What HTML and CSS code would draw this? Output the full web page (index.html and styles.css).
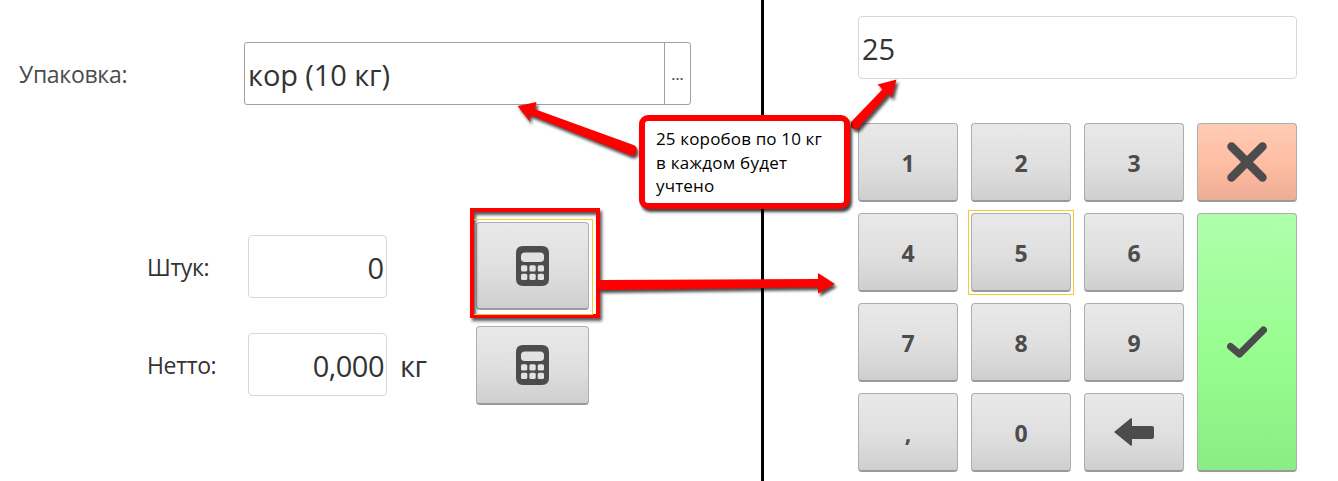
FILE: index.html
```html
<!DOCTYPE html>
<html lang="ru">
<head>
<meta charset="utf-8">
<title>Упаковка</title>
<link rel="stylesheet" href="styles.css">
</head>
<body>
<svg class="defs" width="0" height="0">
  <symbol id="calc" viewBox="0 0 33 40">
    <path fill="#4c4c4c" fill-rule="evenodd" d="M7 0H26Q33 0 33 7V33Q33 40 26 40H7Q0 40 0 33V7Q0 0 7 0ZM9 6.500Q5 6.500 5 10V12.500Q5 16 9 16H24Q28 16 28 12.500V10Q28 6.500 24 6.500Z"/>
    <g fill="#e2e2e2">
      <rect x="5" y="19.300" width="6.300" height="6.300" rx="1.500"/><rect x="13.400" y="19.300" width="6.300" height="6.300" rx="1.500"/><rect x="21.700" y="19.300" width="6.300" height="6.300" rx="1.500"/>
      <rect x="5" y="27.700" width="6.300" height="6.300" rx="1.500"/><rect x="13.400" y="27.700" width="6.300" height="6.300" rx="1.500"/><rect x="21.700" y="27.700" width="6.300" height="6.300" rx="1.500"/>
    </g>
  </symbol>
</svg>
<main class="screen">
  <section class="form">
    <div class="row pack">
      <label class="label muted">Упаковка:</label>
      <div class="picker"><span class="value kor">кор (10 кг)</span><button class="more">...</button></div>
    </div>
    <div class="row pieces">
      <label class="label shtuk">Штук:</label>
      <div class="input"><span class="value">0</span></div>
      <button class="btn calc tall"><svg width="33" height="40"><use href="#calc"/></svg></button>
    </div>
    <div class="row net">
      <label class="label netto">Нетто:</label>
      <div class="input"><span class="value zeros">0,000</span></div>
      <span class="value unit">кг</span>
      <button class="btn calc"><svg width="33" height="40"><use href="#calc"/></svg></button>
    </div>
  </section>
  <section class="pad">
    <div class="display"><span class="value">25</span></div>
    <div class="keys">
      <button class="btn">1</button><button class="btn">2</button><button class="btn">3</button>
      <button class="btn cancel"><svg width="40" height="40"><path d="M4.500 4.500L35.500 35.500M35.500 4.500L4.500 35.500" stroke="#4c4c4c" stroke-width="8.500" stroke-linecap="round"/></svg></button>
      <button class="btn">4</button><button class="btn focused">5</button><button class="btn">6</button>
      <button class="btn ok"><svg width="40" height="32"><path d="M3.500 20.500L12.500 28L36.500 4" fill="none" stroke="#4c4c4c" stroke-width="7" stroke-linecap="round" stroke-linejoin="round"/></svg></button>
      <button class="btn">7</button><button class="btn">8</button><button class="btn">9</button>
      <button class="btn">,</button><button class="btn">0</button>
      <button class="btn back"><svg width="40" height="28"><path d="M0 14L16.500 .5Q18 -.5 18 1.500V8H38Q40 8 40 10V19Q40 21 38 21H18V26.500Q18 28.500 16.500 27.500Z" fill="#4c4c4c"/></svg></button>
    </div>
  </section>
</main>
<div class="highlight"></div>
<svg class="arrows" width="1338" height="481" fill="#f00">
  <path d="M517.500 106L536.500 102L535 109.300L633.500 145A5.500 5.500 0 0 1 631 155.500L529.500 114.800L530 121.700Z"/>
  <path d="M896.500 79.500L877.500 84.500L882.500 89.300L851 122V127Q854 130.500 858 128.500L889 93.300L891.700 98.300Z"/>
  <path d="M602 280L818 279V273L835 284L818 293.500V287.300L602 290Q598 290 598 285Q598 280 602 280Z"/>
</svg>
<div class="callout"><p>25 коробов по 10 кг</p><p class="l2">в каждом будет</p><p class="l3">учтено</p></div>
</body>
</html>
```
FILE: styles.css
```css
* { box-sizing: border-box; }
body { margin: 0; width: 1338px; height: 481px; overflow: hidden; position: relative; background: #fff; color: #333; font-family: "Open Sans", "Noto Sans", sans-serif; }
button { font-family: inherit; margin: 0; padding: 0; }
p { margin: 0; }
.defs { position: absolute; }
.screen { display: flex; height: 481px; }
.form { width: 764px; flex: none; border-right: 3px solid #000; padding-top: 42px; }
.row { display: flex; }
.label { font-size: 23px; line-height: 65px; height: 63px; white-space: nowrap; }
.value { display: block; font-size: 29px; line-height: 62px; white-space: nowrap; }
.pack .label { width: 244px; padding-left: 19px; letter-spacing: -.3px; }
.muted { color: #4c4c4c; }
.picker { width: 447px; height: 63px; border: 1px solid #a0a0a0; border-radius: 3px; display: flex; justify-content: space-between; padding-left: 3px; }
.kor { line-height: 64px; letter-spacing: -.1px; }
.more { width: 26px; border: 0; border-left: 1px solid #a0a0a0; background: none; color: #4c4c4c; font-size: 15px; font-weight: 600; }
.pieces { margin-top: 117px; height: 88px; }
.pieces .label, .pieces .input { margin-top: 13px; }
.net { margin-top: 16px; }
.net .label, .net .input, .unit { margin-top: 7px; }
.pieces .label, .net .label { width: 248px; padding-left: 147px; letter-spacing: -.35px; }
.input { width: 139px; height: 63px; border: 1px solid #d8d8d8; border-radius: 4px; text-align: right; padding-right: 2px; }
.input .value { line-height: 64px; }
.zeros { letter-spacing: -.5px; }
.unit { width: 89px; padding-left: 13px; line-height: 66px; letter-spacing: -.4px; }
.pieces .calc { margin-left: 89px; }
.btn { display: flex; align-items: center; justify-content: center; height: 79px; border: 1px solid #adadad; border-bottom: 2px solid #999; border-radius: 4px; background: linear-gradient(#e9e9e9, #dfdfdf 55%, #cfcfcf); color: #4c4c4c; font-size: 23px; font-weight: 700; padding-top: 2px; }
.btn svg { display: block; }
.calc { width: 113px; padding: 0 1px 0 0; }
.tall { height: 88px; padding-top: 1px; }
.pad { width: 439px; flex: none; margin-left: 94px; padding-top: 16px; }
.display { width: 439px; height: 63px; border: 1px solid #d8d8d8; border-radius: 4px; padding-left: 3px; letter-spacing: -.2px; }
.display .value { line-height: 64px; }
.keys { margin-top: 44px; display: grid; grid-template-columns: repeat(4, 100px); grid-auto-rows: 79px; gap: 11px 13px; }
.focused { position: relative; }
.focused::after { content: ""; position: absolute; inset: -4px -4px -5px; border: 1px solid #f8cb2c; }
.cancel { background: linear-gradient(#ffcbb5, #fdbda2 55%, #edac94); padding: 0; }
.ok { grid-column: 4; grid-row: 2 / 5; height: 259px; background: linear-gradient(#afffaa, #95fc8d 60%, #8beb85); padding: 0; }
.back { padding: 0; }
.highlight { position: absolute; left: 470px; top: 208px; width: 130px; height: 110px; border: 4px solid #f00; box-shadow: 2px 3px 3px rgba(0,0,0,.65), inset 2px 3px 3px rgba(0,0,0,.65); }
.highlight::after { content: ""; position: absolute; left: 0; top: 7px; width: 118px; height: 94px; border: 1px solid #f8cb2c; border-left: 0; }
.arrows { position: absolute; left: 0; top: 0; filter: drop-shadow(2px 3px 1.5px rgba(0,0,0,.7)); }
.callout { position: absolute; left: 639px; top: 115px; width: 211px; height: 94px; border: 6px solid #f00; border-radius: 9px; background: #fff; color: #000; font-size: 17px; line-height: 23.500px; letter-spacing: .15px; padding: 6px 0 0 11px; white-space: nowrap; box-shadow: 2px 3px 3px rgba(0,0,0,.75); }
.l2 { letter-spacing: .25px; }
```
